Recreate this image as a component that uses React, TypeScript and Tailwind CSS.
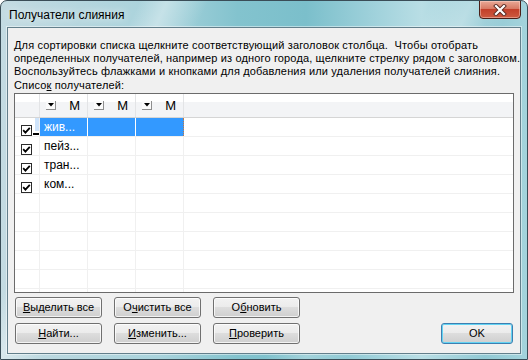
import React from "react";

function Check() {
  return (
    <div className="w-[11px] h-[11px] border border-[#2b2b2b] bg-white flex items-center justify-center">
      <svg width="9" height="9" viewBox="0 0 9 9">
        <path d="M1.2 4.2 L3.4 6.6 L7.8 1.8" fill="none" stroke="#000" strokeWidth="1.8" />
      </svg>
    </div>
  );
}

function Drop() {
  return (
    <div className="w-[10px] h-[9px] border-r border-b border-[#8e8e8e] bg-[#fbfbfb] flex items-center justify-center">
      <svg width="6" height="4" viewBox="0 0 6 4">
        <path d="M0 0 H6 L3 3.5 Z" fill="#000" />
      </svg>
    </div>
  );
}

function Btn({ children, def = false, w = "w-[87px]" }: { children: React.ReactNode; def?: boolean; w?: string }) {
  return (
    <div
      className={`${w} h-[21px] rounded-[3px] border flex items-center justify-center text-[11px] text-black ${
        def
          ? "border-[#3c7fb1] shadow-[inset_0_0_0_1px_#63d3f3]"
          : "border-[#707070] shadow-[inset_0_0_0_1px_rgba(255,255,255,0.75)]"
      } bg-[linear-gradient(to_bottom,#f2f2f2_0%,#ebebeb_50%,#dddddd_50%,#cfcfcf_100%)]`}
    >
      {children}
    </div>
  );
}

const rows = ["жив...", "пейз...", "тран...", "ком...", "", "", "", "", "", ""];

export default function App() {
  return (
    <div className="w-[528px] h-[360px] relative overflow-hidden rounded-t-[7px] border border-[#3a4d57] flex flex-col font-['Liberation_Sans',Arial,sans-serif] bg-[linear-gradient(115deg,rgba(255,255,255,0)_0%,rgba(255,255,255,0)_20%,rgba(255,255,255,0.35)_24%,rgba(255,255,255,0)_30%,rgba(255,255,255,0)_62%,rgba(255,255,255,0.3)_68%,rgba(255,255,255,0)_74%),linear-gradient(90deg,#c4dbe2_0%,#b5d6de_15%,#a9d3dc_30%,#83c3ce_45%,#7bbfcb_58%,#9dd0da_70%,#b9dee5_80%,#91c9d4_92%,#a4d3dc_100%)]">
      {/* title bar */}
      <div className="h-[26px] flex items-center pl-[8px] pt-[1px] text-[12px] text-black [text-shadow:0_0_8px_rgba(255,255,255,0.95)]">
        Получатели слияния
      </div>
      <div className="absolute top-[-1px] right-[6px] w-[42px] h-[19px] rounded-b-[4px] border border-[#4a1f18] bg-[linear-gradient(to_bottom,#e9a997_0%,#d77a64_45%,#c3402a_50%,#cd5a40_100%)] shadow-[inset_0_0_0_1px_rgba(255,220,210,0.45)] flex items-center justify-center">
        <svg width="14" height="12" viewBox="0 0 14 12">
          <path d="M3 2 L11 10 M11 2 L3 10" stroke="#5a2a22" strokeWidth="4" strokeLinecap="square" />
          <path d="M3 2 L11 10 M11 2 L3 10" stroke="#ffffff" strokeWidth="2.2" strokeLinecap="square" />
        </svg>
      </div>

      {/* client */}
      <div className="mx-[6px] h-[327px] border border-[#637f8b] bg-[#f0f0f0] px-[6px] pt-[11px] text-[11px] leading-[13px] text-black shadow-[0_0_0_1px_rgba(255,255,255,0.45)] flex flex-col">
        <div className="whitespace-pre tracking-[0.15px]">Для сортировки списка щелкните соответствующий заголовок столбца.  Чтобы отобрать</div>
        <div className="whitespace-pre tracking-[0.15px]">определенных получателей, например из одного города, щелкните стрелку рядом с заголовком.</div>
        <div className="whitespace-pre tracking-[0.15px]">Воспользуйтесь флажками и кнопками для добавления или удаления получателей слияния.</div>
        <div className="whitespace-pre tracking-[0.15px] mt-[1px]">
          Списо<span className="underline">к</span> получателей:
        </div>

        {/* list */}
        <div className="mt-[1px] w-[500px] h-[200px] shrink-0 border border-[#6b6b6b] bg-white overflow-hidden">
          <div className="flex h-[24px] border-b border-[#d5d5d5] bg-[linear-gradient(to_bottom,#ffffff_0%,#ffffff_35%,#f3f4f6_35%,#f3f4f6_100%)]">
            <div className="w-[25px] border-r border-[#e3e4e6]" />
            {[0, 1, 2].map((i) => (
              <div key={i} className="w-[48px] border-r border-[#e3e4e6] flex items-center justify-between pl-[6px] pr-[7px]">
                <Drop />
                <span className="text-[13px] leading-none">М</span>
              </div>
            ))}
            <div className="flex-1" />
          </div>
          {rows.map((r, i) => {
            const sel = i === 0;
            return (
              <div key={i} className="flex h-[19px] border-b border-[#f0f0f0]">
                <div className="w-[25px] border-r border-[#f0f0f0] pl-[6px] pt-[7px] relative">
                  {r && <Check />}
                  {sel && (
                    <>
                      <div className="absolute right-0 top-0 w-[4px] h-[13px] bg-[#cfe4fb]" />
                      <div className="absolute right-0 top-[15px] w-[6px] h-[2px] bg-black" />
                    </>
                  )}
                </div>
                <div
                  className={`w-[48px] border-r pl-[4px] text-[12px] leading-[18px] ${
                    sel ? "bg-[#3399ff] text-white border-white" : "border-[#f0f0f0] text-black"
                  }`}
                >
                  {r}
                </div>
                <div className={`w-[48px] border-r ${sel ? "bg-[#3399ff] border-white" : "border-[#f0f0f0]"}`} />
                <div
                  className={`w-[48px] border-r ${
                    sel ? "bg-[#3399ff] border-dotted border-[#c8763a]" : "border-[#f0f0f0]"
                  }`}
                />
                <div className="flex-1" />
              </div>
            );
          })}
        </div>

        {/* buttons */}
        <div className="mt-[4px] flex gap-[12px] pl-[1px]">
          <Btn>
            <span className="underline">В</span>ыделить все
          </Btn>
          <Btn>
            О<span className="underline">ч</span>истить все
          </Btn>
          <Btn>
            О<span className="underline">б</span>новить
          </Btn>
        </div>
        <div className="mt-[5px] flex gap-[12px] pl-[1px] pr-[1px]">
          <Btn>
            <span className="underline">Н</span>айти...
          </Btn>
          <Btn>
            <span className="underline">И</span>зменить...
          </Btn>
          <Btn>
            <span className="underline">П</span>роверить
          </Btn>
          <div className="ml-auto">
            <Btn def w="w-[72px]">
              OK
            </Btn>
          </div>
        </div>
      </div>
    </div>
  );
}
